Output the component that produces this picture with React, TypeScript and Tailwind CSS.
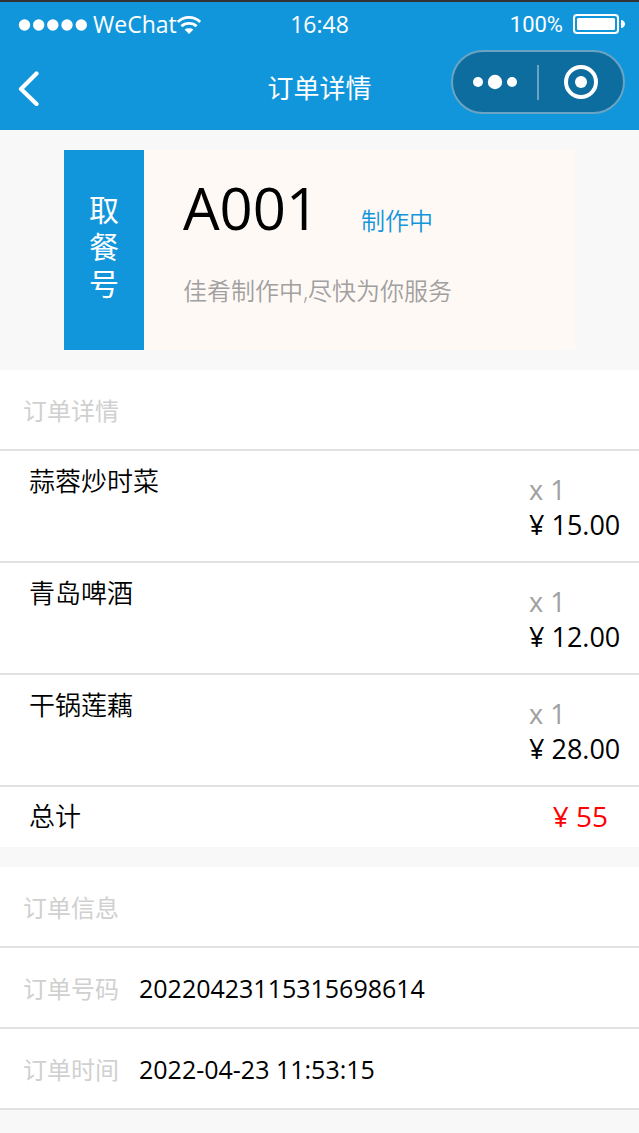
import React from 'react';

interface OrderItem {
  name: string;
  count: number;
  price: string;
}

interface InfoRowProps {
  label: string;
  value: string;
}

const items: OrderItem[] = [
  { name: '蒜蓉炒时菜', count: 1, price: '15.00' },
  { name: '青岛啤酒', count: 1, price: '12.00' },
  { name: '干锅莲藕', count: 1, price: '28.00' },
];

const info: InfoRowProps[] = [
  { label: '订单号码', value: '20220423115315698614' },
  { label: '订单时间', value: '2022-04-23 11:53:15' },
];

const SignalDots = () => (
  <svg className="h-3 w-[70px]" viewBox="0 0 70 12" fill="white" aria-hidden="true">
    {[6.5, 20.7, 34.8, 49, 63.3].map((cx) => (
      <circle key={cx} cx={cx} cy="6" r="5.7" />
    ))}
  </svg>
);

const WifiIcon = () => (
  <svg className="h-[18px] w-6" viewBox="0 0 24 18" fill="none" aria-hidden="true">
    <path d="M0.8 5.9C7 -0.1 17 -0.1 23.2 5.9" stroke="white" strokeWidth="2.8" />
    <path d="M4.4 10.2C8.6 6.4 15.4 6.4 19.6 10.2" stroke="white" strokeWidth="2.8" />
    <path d="M7.6 13.6C10 11.8 14 11.8 16.4 13.6L12 18Z" fill="white" />
  </svg>
);

const BatteryIcon = () => (
  <svg className="h-5 w-[52px]" viewBox="0 0 52 20" fill="none" aria-hidden="true">
    <rect x="1" y="1" width="44" height="18" rx="3" stroke="white" strokeWidth="2" />
    <rect x="4" y="4" width="38" height="12" rx="1.5" fill="white" />
    <path d="M48 6C50.2 6 52 7.8 52 10S50.2 14 48 14Z" fill="white" />
  </svg>
);

const StatusBar = () => (
  <div className="grid h-11 grid-cols-[1fr_auto_1fr] items-center text-[23px] leading-none">
    <div className="flex items-center pt-0.5 pl-[18px]">
      <SignalDots />
      <span className="pb-0.5 pl-[5px]">WeChat</span>
      <WifiIcon />
    </div>
    <span>16:48</span>
    <div className="flex items-center justify-end gap-2.5 pr-3.5">
      <span className="pt-0.5 font-[Roboto,sans-serif] text-[22px]">100%</span>
      <BatteryIcon />
    </div>
  </div>
);

const Capsule = () => (
  <div className="flex h-16 w-[174px] items-center rounded-full border-2 border-[#6ba4c3] bg-[#0d6d9f]">
    <button type="button" aria-label="更多" className="flex h-full flex-1 items-center justify-center">
      <svg className="h-4 w-[46px]" viewBox="0 0 46 16" fill="white" aria-hidden="true">
        <circle cx="6" cy="8" r="5" />
        <circle cx="23" cy="8" r="7.2" />
        <circle cx="40" cy="8" r="5" />
      </svg>
    </button>
    <span className="h-[35px] w-0.5 bg-[#6ba4c3]" />
    <button type="button" aria-label="关闭" className="flex h-full flex-1 items-center justify-center">
      <svg className="h-[34px] w-[34px]" viewBox="0 0 34 34" fill="none" aria-hidden="true">
        <circle cx="17" cy="17" r="15" stroke="white" strokeWidth="4" />
        <circle cx="17" cy="17" r="6" fill="white" />
      </svg>
    </button>
  </div>
);

const NavBar = () => (
  <div className="grid h-[84px] grid-cols-[1fr_auto_1fr] items-center">
    <button type="button" aria-label="返回" className="ml-[18px] w-[22px]">
      <svg className="h-9 w-[22px]" viewBox="0 0 22 36" fill="none" aria-hidden="true">
        <path
          d="M18.5 3.5L3 19L18.5 34"
          stroke="white"
          strokeWidth="4.2"
          strokeLinecap="round"
          strokeLinejoin="round"
        />
      </svg>
    </button>
    <h1 className="text-[26px] leading-none">订单详情</h1>
    <div className="flex justify-end self-start pt-1 pr-3.5">
      <Capsule />
    </div>
  </div>
);

const PickupCard = () => (
  <section className="mx-auto my-5 flex h-[200px] w-4/5 bg-[#fff9f5]">
    <h2 className="flex w-20 shrink-0 items-center justify-center bg-[#1296db] pb-2 text-white">
      <span className="w-[30px] text-[30px] leading-[37px] break-all">取餐号</span>
    </h2>
    <div className="flex flex-col pt-4 pl-[39px]">
      <div className="flex items-baseline gap-[42px]">
        <span className="text-[58px] leading-[84px]">A001</span>
        <span className="text-[24px] font-[350] text-[#1296db]">制作中</span>
      </div>
      <p className="pt-[25px] text-[24px] leading-8 font-[350] text-[#a0a0a0]">佳肴制作中,尽快为你服务</p>
    </div>
  </section>
);

const SectionTitle = ({ children }: { children: React.ReactNode }) => (
  <h2 className="border-b-2 border-[#e1e1e1] pt-[23px] pb-[21px] pl-[23px] text-[24px] leading-[35px] text-[#d0d0d0]">
    {children}
  </h2>
);

const ItemRow = ({ name, count, price }: OrderItem) => (
  <li className="flex h-28 justify-between border-b-2 border-[#e1e1e1] pl-[29px]">
    <span className="pt-3 text-[26px] leading-9 font-[350]">{name}</span>
    <div className="w-[110px] shrink-0 pt-[21px] text-[27px] leading-[35px]">
      <p className="text-[#a0a0a0]">x {count}</p>
      <p>¥ {price}</p>
    </div>
  </li>
);

const InfoRow = ({ label, value }: InfoRowProps) => (
  <div className="flex items-center gap-5 border-b-2 border-[#e1e1e1] pt-[23px] pb-[21px] pl-[23px] leading-[35px]">
    <dt className="text-[24px] text-[#d0d0d0]">{label}</dt>
    <dd className="text-[25px]">{value}</dd>
  </div>
);

export default function App() {
  return (
    <div className="flex min-h-screen flex-col bg-[#f8f8f8] font-['Open_Sans','Noto_Sans_CJK_SC',sans-serif] text-black">
      <header className="border-t-2 border-[#333333] bg-[#1296db] text-white">
        <StatusBar />
        <NavBar />
      </header>
      <main>
        <PickupCard />
        <section className="bg-white">
          <SectionTitle>订单详情</SectionTitle>
          <ul>
            {items.map((item) => (
              <ItemRow key={item.name} {...item} />
            ))}
          </ul>
          <div className="flex h-[60px] items-center justify-between pr-[31px] pb-0.5 pl-[29px]">
            <span className="text-[26px] font-[350]">总计</span>
            <span className="text-[28px] text-[#ff0000]">¥ 55</span>
          </div>
        </section>
        <section className="mt-5 bg-white">
          <SectionTitle>订单信息</SectionTitle>
          <dl>
            {info.map((row) => (
              <InfoRow key={row.label} {...row} />
            ))}
          </dl>
        </section>
      </main>
    </div>
  );
}
